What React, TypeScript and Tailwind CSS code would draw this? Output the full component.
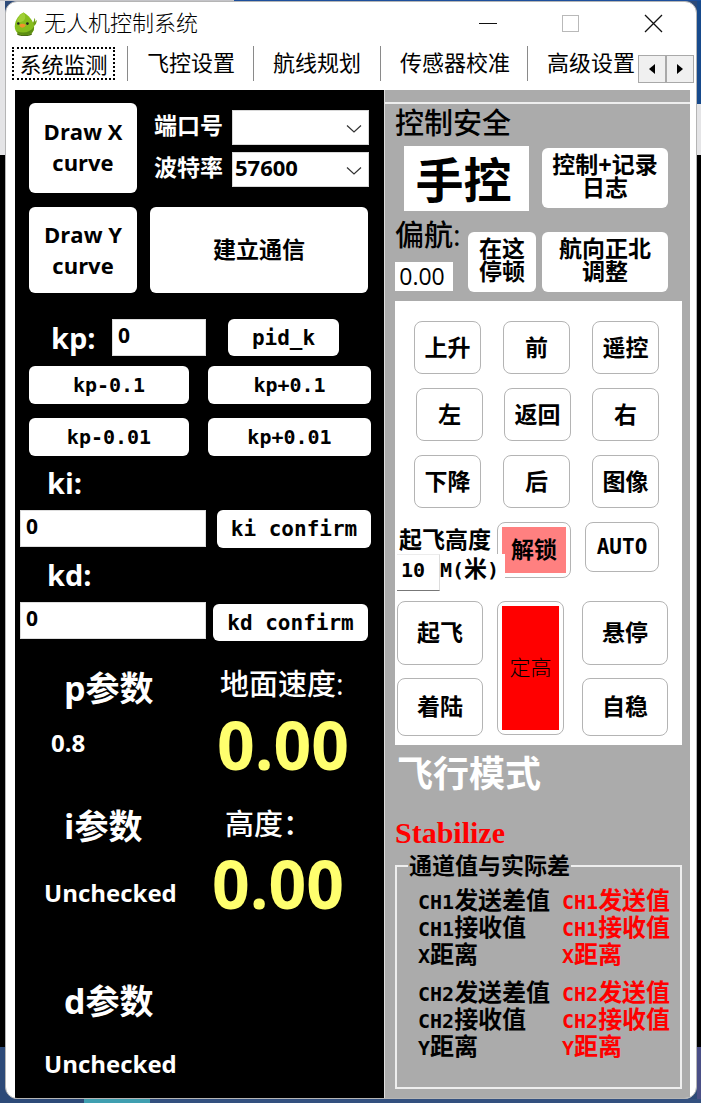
import React from "react";

const UI = "font-['Open_Sans','Noto_Sans_CJK_SC',sans-serif]";
const HAN = "font-['Liberation_Sans','Noto_Sans_CJK_SC',sans-serif]";
const MONO = "font-['DejaVu_Sans_Mono','Noto_Sans_CJK_SC',monospace]";

type ButtonProps = { className?: string; children: React.ReactNode };

function PanelButton({ className = "", children }: ButtonProps) {
  return (
    <button
      type="button"
      className={`flex items-center justify-center rounded-md bg-white text-center font-bold text-black ${className}`}
    >
      {children}
    </button>
  );
}

function PadButton({ className = "", children }: ButtonProps) {
  return (
    <button
      type="button"
      className={`flex items-center justify-center rounded-lg border border-[#b4b4b4] bg-white leading-[26px] font-bold text-black ${className}`}
    >
      {children}
    </button>
  );
}

function Mascot() {
  return (
    <svg viewBox="0 0 24 26" className="h-[25px] w-[23px] shrink-0" aria-hidden="true">
      <ellipse cx="11" cy="23" rx="8" ry="2" fill="#4a6b14" />
      <path d="M19.500 12 Q21 9 21.500 6 Q22.500 8 22 10 Q23.500 8.500 24 8.500 Q23.500 13 20.500 15Z" fill="#6f9f16" />
      <path d="M10 0.500 C14 2.500 21 9 21 16 C21 22 16 24 11 24 C5 24 0.800 21 0.800 15 C0.800 8 6 2 10 0.500Z" fill="#86bd1c" />
      <path d="M10 0.500 C12 3 12.500 7 10 9 C7 11 4 10.500 3 9 C5 5 7 2 10 0.500Z" fill="#a0cf35" />
      <path d="M21 15 C21 22 16 24 11 24 C7 24 4 22 3 20 C10 23 17 21 21 15Z" fill="#5c8d12" />
      <path d="M5.500 13.500 Q8.500 11 12.500 13.500 Q11 16.500 8.500 16.500 Q6.500 16.500 5.500 13.500Z" fill="#f0932b" />
      <circle cx="4.500" cy="12" r="1.300" fill="#222" />
      <circle cx="14" cy="12" r="1.400" fill="#222" />
    </svg>
  );
}

function ComboBox({ id, value }: { id: string; value: string }) {
  return (
    <div className="relative h-[35px]">
      <select
        id={id}
        defaultValue={value}
        className={`h-full w-full appearance-none rounded-none border border-[#d8d8d8] bg-white pb-[5px] pl-[2px] text-[22px] leading-[28px] font-bold text-black ${UI}`}
      >
        <option value={value}>{value}</option>
      </select>
      <svg viewBox="0 0 16 8" className="pointer-events-none absolute top-[15px] right-[7px] h-2 w-4" aria-hidden="true">
        <path d="M1 0.500 L8 7 L15 0.500" fill="none" stroke="#333" strokeWidth="1.200" />
      </svg>
    </div>
  );
}

function TitleBar() {
  return (
    <header className="flex h-[44px] items-center pr-[32px] pl-[8px]">
      <Mascot />
      <h1 className={`ml-[7px] flex-1 text-[22px] leading-[32px] font-light text-black ${HAN}`}>无人机控制系统</h1>
      <div className="flex items-center gap-[63px]">
        <button type="button" aria-label="最小化" className="h-5 w-5">
          <svg viewBox="0 0 20 20"><path d="M1 9.500H19" stroke="#111" /></svg>
        </button>
        <button type="button" aria-label="最大化" className="h-5 w-5">
          <svg viewBox="0 0 20 20"><rect x="1.500" y="1.500" width="16" height="16" fill="none" stroke="#b9b9b9" /></svg>
        </button>
        <button type="button" aria-label="关闭" className="h-5 w-5">
          <svg viewBox="0 0 20 20"><path d="M1 1L18 18M18 1L1 18" stroke="#111" strokeWidth="1.300" /></svg>
        </button>
      </div>
    </header>
  );
}

function Tabs() {
  const tab = "h-[35px] border-l border-[#8a8a8a] pl-[19px] text-left";
  return (
    <nav className={`flex h-[44px] items-start pr-[2px] pl-[6px] text-[22px] leading-[34px] whitespace-nowrap text-black ${HAN}`}>
      <button type="button" className="mt-px mr-[12px] h-[33px] w-[103px] border-2 border-dotted border-black text-center leading-[34px]">
        系统监测
      </button>
      <button type="button" className={`w-[126px] ${tab}`}>飞控设置</button>
      <button type="button" className={`w-[127px] ${tab}`}>航线规划</button>
      <button type="button" className={`w-[147px] ${tab}`}>传感器校准</button>
      <button type="button" className={`min-w-0 flex-1 ${tab}`}>高级设置</button>
      <div className="mt-[9px] flex">
        <button type="button" aria-label="向左滚动" className="flex h-[28px] w-[28px] items-center justify-center border border-[#a9a9a9] bg-[#f0f0f0]">
          <svg viewBox="0 0 6 10" className="h-[10px] w-[6px]"><path d="M6 0V10L0 5z" /></svg>
        </button>
        <button type="button" aria-label="向右滚动" className="flex h-[28px] w-[28px] items-center justify-center border border-[#a9a9a9] bg-[#f0f0f0]">
          <svg viewBox="0 0 6 10" className="h-[10px] w-[6px]"><path d="M0 0V10L6 5z" /></svg>
        </button>
      </div>
    </nav>
  );
}

function ValueInput({ id, className = "" }: { id: string; className?: string }) {
  return (
    <input
      id={id}
      type="text"
      defaultValue="0"
      className={`h-[37px] min-w-0 border border-[#dddddd] bg-white pb-[6px] pl-[5px] text-[21px] leading-[28px] font-bold text-black ${UI} ${className}`}
    />
  );
}

function TuningPanel() {
  const small = `text-[20px] leading-[28px] ${MONO}`;
  const wide = `text-[21px] leading-[28px] ${MONO}`;
  const label = "text-[29px] leading-[54px] font-bold";
  return (
    <section className="min-w-0 flex-[369] bg-black pt-[13px] pb-[17px] text-white">
      <div className="flex pr-[15px] pl-[14px]">
        <PanelButton className="h-[90px] w-[108px] pb-[2px] text-[22px] leading-[31px]">Draw X<br />curve</PanelButton>
        <div className={`ml-[17px] grid flex-1 grid-cols-[78px_1fr] content-start items-center gap-y-[7px] pt-[7px] text-[23px] leading-[30px] font-bold ${HAN}`}>
          <label htmlFor="port" className="pb-[3px]">端口号</label>
          <ComboBox id="port" value="" />
          <label htmlFor="baud" className="pb-[3px]">波特率</label>
          <ComboBox id="baud" value="57600" />
        </div>
      </div>
      <div className="mt-[14px] flex gap-[13px] pr-[16px] pl-[14px]">
        <PanelButton className="h-[86px] w-[108px] text-[22px] leading-[31px]">Draw Y<br />curve</PanelButton>
        <PanelButton className={`flex-1 text-[23px] ${HAN}`}>建立通信</PanelButton>
      </div>

      <div className="mt-[26px] flex items-center pl-[36px]">
        <label htmlFor="kp" className="w-[61px] text-[29px] leading-[37px] font-bold">kp:</label>
        <ValueInput id="kp" className="w-[94px]" />
        <PanelButton className={`ml-[22px] h-[37px] w-[111px] ${wide}`}>pid_k</PanelButton>
      </div>
      <div className="mt-[10px] grid grid-cols-[160fr_163fr] gap-x-[19px] gap-y-[14px] pr-[13px] pl-[14px]">
        <PanelButton className={`h-[38px] ${small}`}>kp-0.1</PanelButton>
        <PanelButton className={`h-[38px] ${small}`}>kp+0.1</PanelButton>
        <PanelButton className={`h-[38px] ${small}`}>kp-0.01</PanelButton>
        <PanelButton className={`h-[38px] ${small}`}>kp+0.01</PanelButton>
      </div>

      <label htmlFor="ki" className={`block pl-[32px] ${label}`}>ki:</label>
      <div className="flex gap-[11px] pr-[13px] pl-[5px]">
        <ValueInput id="ki" className="w-[186px]" />
        <PanelButton className={`h-[38px] flex-1 ${wide}`}>ki confirm</PanelButton>
      </div>
      <label htmlFor="kd" className={`block pl-[32px] ${label}`}>kd:</label>
      <div className="flex gap-[7px] pr-[16px] pl-[5px]">
        <ValueInput id="kd" className="w-[186px]" />
        <PanelButton className={`mt-[2px] h-[37px] flex-1 ${wide}`}>kd confirm</PanelButton>
      </div>

      <div className="flex pt-[23px] font-bold">
        <dl className="w-[203px]">
          <dt className="pl-[49px] text-[34px] leading-[48px]">p参数</dt>
          <dd className="mt-[15px] pl-[36px] text-[24px] leading-[32px]">0.8</dd>
          <dt className="mt-[43px] pl-[49px] text-[34px] leading-[48px]">i参数</dt>
          <dd className="mt-[27px] pl-[29px] text-[24px] leading-[32px]">Unchecked</dd>
          <dt className="mt-[68px] pl-[49px] text-[34px] leading-[48px]">d参数</dt>
          <dd className="mt-[23px] pl-[29px] text-[24px] leading-[32px]">Unchecked</dd>
        </dl>
        <dl className="min-w-0 flex-1">
          <dt className="pl-[2px] text-[29px] leading-[40px] font-medium">地面速度:</dt>
          <dd className="mt-[8px] -ml-px text-[66px] leading-[64px] text-[#ffff6e]">0.00</dd>
          <dt className="mt-[28px] pl-[7px] text-[29px] leading-[40px] font-medium">高度：</dt>
          <dd className="mt-[7px] -ml-[6px] text-[66px] leading-[64px] text-[#ffff6e]">0.00</dd>
        </dl>
      </div>
    </section>
  );
}

function FlightPad() {
  const key = "h-[53px] w-[67px]";
  return (
    <div className={`mt-[9px] mr-[8px] bg-white pt-[20px] pb-[9px] text-[23px] text-black ${HAN}`}>
      <div className="flex flex-col gap-[14px] pr-[23px]">
        <div className="flex justify-between pl-[19px]">
          <PadButton className={key}>上升</PadButton>
          <PadButton className={key}>前</PadButton>
          <PadButton className={key}>遥控</PadButton>
        </div>
        <div className="flex justify-between pl-[21px]">
          <PadButton className={key}>左</PadButton>
          <PadButton className={key}>返回</PadButton>
          <PadButton className={key}>右</PadButton>
        </div>
        <div className="flex justify-between pl-[19px]">
          <PadButton className={key}>下降</PadButton>
          <PadButton className={key}>后</PadButton>
          <PadButton className={key}>图像</PadButton>
        </div>
        <div className="flex">
          <div className="w-[102px] pt-[4px] font-bold">
            <label htmlFor="takeoff" className="block pl-[4px] leading-[28px] whitespace-nowrap">起飞高度</label>
            <div className={`relative z-10 ml-[2px] flex w-[108px] text-[20px] leading-[28px] ${MONO}`}>
              <input
                id="takeoff"
                type="text"
                defaultValue="10"
                className="h-[37px] w-[43px] border-t border-r border-b border-t-[#ececec] border-r-[#dddddd] border-b-[#777777] bg-white pb-[6px] pl-[4px]"
              />
              <span className="h-[30px] flex-1 bg-white leading-[30px] whitespace-nowrap">
                M(<span className={`text-[23px] ${HAN}`}>米</span>)
              </span>
            </div>
          </div>
          <PadButton className="h-[56px] w-[74px] p-[4px]">
            <span className="flex h-full w-full items-center justify-center bg-[#ff8080]">解锁</span>
          </PadButton>
          <PadButton className={`ml-auto h-[50px] w-[74px] text-[21px] ${MONO}`}>AUTO</PadButton>
        </div>
      </div>
      <div className="mt-[10px] flex pr-[14px] pl-[2px]">
        <div className="flex w-[86px] flex-col gap-[13px]">
          <PadButton className="h-[64px]">起飞</PadButton>
          <PadButton className="h-[58px]">着陆</PadButton>
        </div>
        <PadButton className="ml-[14px] h-[134px] w-[67px] p-[4px]">
          <span className="flex h-full w-full items-center justify-center bg-[#ff0000] text-[21px] font-light">定高</span>
        </PadButton>
        <div className="ml-auto flex w-[86px] flex-col gap-[13px]">
          <PadButton className="h-[64px]">悬停</PadButton>
          <PadButton className="h-[58px]">自稳</PadButton>
        </div>
      </div>
    </div>
  );
}

const channels = [
  [
    ["CH1", "发送差值", "发送值"],
    ["CH1", "接收值", "接收值"],
    ["X", "距离", "距离"],
  ],
  [
    ["CH2", "发送差值", "发送值"],
    ["CH2", "接收值", "接收值"],
    ["Y", "距离", "距离"],
  ],
];

function ChannelLabel({ name, text, className = "" }: { name: string; text: string; className?: string }) {
  return (
    <span className={className}>
      <span className={`text-[20px] ${MONO}`}>{name}</span>
      {text}
    </span>
  );
}

function ControlPanel() {
  const twoLine = `h-[60px] pb-[2px] text-[23px] leading-[23px] ${HAN}`;
  return (
    <section className="min-w-0 flex-[305] border-l border-[#dcdcdc] bg-[#ababab] pb-[9px] text-black">
      <div className="h-[14px] border-b-2 border-[#eeeeee]" />
      <div className="pl-[10px]">
        <h2 className={`pt-[2px] text-[29px] leading-[36px] font-medium ${HAN}`}>控制安全</h2>
        <div className="mt-[4px] flex items-start gap-[13px] pl-[9px]">
          <div className={`w-[125px] bg-white pt-[6px] pr-[6px] text-center text-[48px] leading-[59px] font-bold ${HAN}`}>手控</div>
          <PanelButton className={`mt-[2px] w-[126px] ${twoLine}`}>控制+记录<br />日志</PanelButton>
        </div>
        <div className="mt-[8px] flex">
          <div className="w-[73px]">
            <h3 className="text-[29px] leading-[32px] font-medium">偏航:</h3>
            <output className="mt-[11px] block w-[58px] bg-white pr-[4px] text-center text-[23px] leading-[29px]">0.00</output>
          </div>
          <PanelButton className={`mt-[13px] w-[68px] ${twoLine}`}>在这<br />停顿</PanelButton>
          <PanelButton className={`mt-[13px] ml-[6px] w-[126px] ${twoLine}`}>航向正北<br />调整</PanelButton>
        </div>
        <FlightPad />
        <h2 className={`mt-[8px] pl-[2px] text-[36px] leading-[44px] font-bold text-white ${HAN}`}>飞行模式</h2>
        <p className="mt-[20px] font-['Liberation_Serif',serif] text-[30px] leading-[32px] font-bold text-[#ff0000]">Stabilize</p>
        <fieldset className={`mt-[4px] mr-[8px] border-2 border-[#eeeeee] pt-[8px] pb-[27px] pl-[21px] font-bold ${HAN}`}>
          <legend className="-ml-[10px] px-[1px] text-[23px] leading-[26px]">通道值与实际差</legend>
          <div className="flex flex-col gap-[11px] text-[24px] leading-[27px] whitespace-nowrap">
            {channels.map((group, g) => (
              <div key={g}>
                {group.map(([name, diff, value]) => (
                  <div key={diff} className="flex h-[27px]">
                    <ChannelLabel name={name} text={diff} className="w-[144px]" />
                    <ChannelLabel name={name} text={value} className="text-[#ff0000]" />
                  </div>
                ))}
              </div>
            ))}
          </div>
        </fieldset>
      </div>
    </section>
  );
}

export default function App() {
  return (
    <div className={`flex min-h-screen flex-col ${UI} bg-[#2d4a78]`}>
      <div className="flex h-px">
        <div className="w-1/3 bg-[#c4c4c8]" />
        <div className="flex-1 bg-[#1d4f9c]" />
      </div>
      <div className="flex flex-1">
        <div className="flex w-[5px] flex-col">
          <div className="h-[154px] bg-[#e4e4e6]" />
          <div className="flex-1 bg-black" />
          <div className="h-[52px] bg-[#2d4a78]" />
        </div>
        <main className="flex min-w-0 flex-1 flex-col overflow-hidden rounded-[12px] border border-[#b5b5b5] bg-white">
          <TitleBar />
          <Tabs />
          <div className="flex flex-1 pr-[6px] pl-[9px]">
            <TuningPanel />
            <ControlPanel />
          </div>
        </main>
        <div className="flex w-[4px] flex-col">
          <div className="h-[103px] bg-[#174a8c]" />
          <div className="h-[51px] bg-[#e4e4e6]" />
          <div className="flex-1 bg-black" />
          <div className="h-[52px] bg-[#4a4f86]" />
        </div>
      </div>
      <div className="flex h-[4px]">
        <div className="w-[84px] bg-[#2d4a78]" />
        <div className="w-[66px] bg-[#3f9fb0]" />
        <div className="flex-1 bg-[#33507f]" />
      </div>
    </div>
  );
}
